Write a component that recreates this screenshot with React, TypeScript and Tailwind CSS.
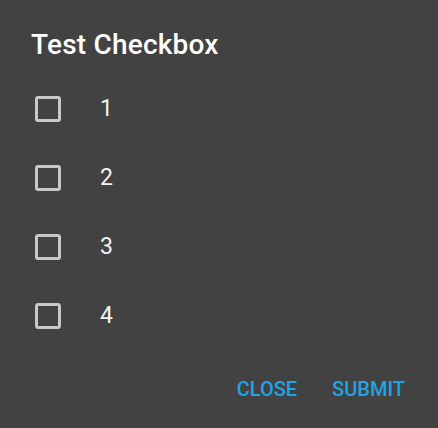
import React from "react";

export default function App() {
  const items = ["1", "2", "3", "4"];
  return (
    <div
      className="w-[438px] h-[428px] bg-[#424242] text-white flex flex-col"
      style={{ fontFamily: "Roboto, 'Noto Sans', sans-serif" }}
    >
      <div className="pt-[29px] pl-[31px] text-[28px] leading-[32px] font-medium tracking-[0.2px]">
        Test Checkbox
      </div>
      <div className="mt-[13px] flex flex-col">
        {items.map((n) => (
          <div key={n} className="h-[69px] flex items-center pl-[35px]">
            <div className="w-[26px] h-[26px] border-[3px] border-[#c8c8c8] rounded-[3px]" />
            <div className="ml-[39px] text-[23px] leading-[28px] text-[#f2f2f2]">{n}</div>
          </div>
        ))}
      </div>
      <div className="flex justify-end items-center pr-[33px] mt-[27px] gap-[35px] text-[20px] leading-[24px] font-medium text-[#1fa3e6]">
        <span>CLOSE</span>
        <span>SUBMIT</span>
      </div>
    </div>
  );
}
